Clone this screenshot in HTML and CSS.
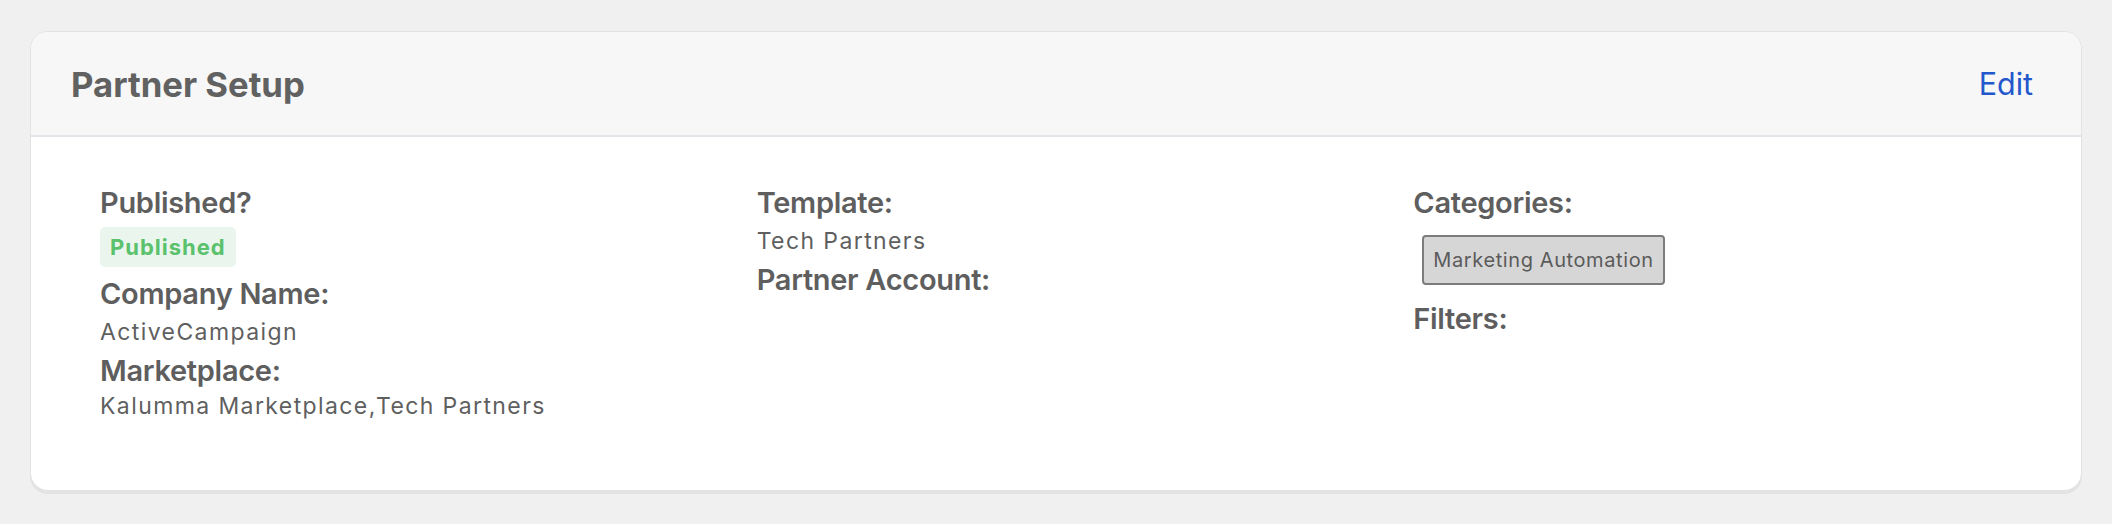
FILE: index.html
```html
<!DOCTYPE html>
<html lang="en">
<head>
<meta charset="utf-8">
<title>Partner Setup</title>
<link rel="stylesheet" href="styles.css">
</head>
<body>
<main class="page">
  <section class="card">
    <header class="card-header">
      <h2 class="card-title">Partner Setup</h2>
      <a class="edit-link" href="#">Edit</a>
    </header>
    <div class="card-body">
      <div class="field-col">
        <div class="field-label">Published?</div>
        <span class="status-badge">Published</span>
        <div class="field-label">Company Name:</div>
        <div class="field-value">ActiveCampaign</div>
        <div class="field-label">Marketplace:</div>
        <div class="field-value field-value--list">Kalumma Marketplace,Tech Partners</div>
      </div>
      <div class="field-col">
        <div class="field-label">Template:</div>
        <div class="field-value">Tech Partners</div>
        <div class="field-label">Partner Account:</div>
      </div>
      <div class="field-col">
        <div class="field-label">Categories:</div>
        <div class="tag-list">
          <span class="tag">Marketing Automation</span>
        </div>
        <div class="field-label">Filters:</div>
      </div>
    </div>
  </section>
</main>
</body>
</html>
```

FILE: styles.css
```css
* {
  box-sizing: border-box;
}

html,
body {
  margin: 0;
  padding: 0;
  background: #f0f0f0;
}

body {
  font-family: Inter, "Liberation Sans", sans-serif;
  color: #5f5f5f;
}

.page {
  padding: 31px 30px 30px;
}

.card {
  background: #ffffff;
  border: 1px solid #e2e2e2;
  border-radius: 18px;
  box-shadow: 0 3px 0 #e3e3e3;
  overflow: hidden;
}

/* header strip: title on the left, edit link on the right */
.card-header {
  display: flex;
  align-items: center;
  justify-content: space-between;
  height: 105px;
  padding: 0 40px;
  background: #f7f7f7;
  border-bottom: 2px solid #e1e4e8;
}

.card-title {
  margin: 0;
  font-size: 34.7px;
  font-weight: 700;
  color: #616161;
}

.edit-link {
  padding: 0 8px;
  font-size: 30.5px;
  font-weight: 400;
  color: #2358cc;
  text-decoration: none;
}

/* three equal field columns */
.card-body {
  display: grid;
  grid-template-columns: repeat(3, 1fr);
  padding: 48px 40px 66px;
}

.field-col {
  display: flex;
  flex-direction: column;
  align-items: flex-start;
  padding-left: 29px;
}

.field-label {
  font-size: 29px;
  line-height: 36px;
  font-weight: 600;
  color: #5e5e5e;
  letter-spacing: -0.3px;
  margin-bottom: 5px;
}

.field-value {
  font-size: 23px;
  line-height: 30px;
  font-weight: 400;
  color: #5f5f5f;
  letter-spacing: 1.4px;
  margin-bottom: 6px;
}

/* comma separated lists may wrap, so they sit on a tighter line */
.field-value--list {
  line-height: 24px;
}

.status-badge {
  height: 40px;
  line-height: 40px;
  margin: 1px 0 8.5px;
  padding: 0 10px;
  border-radius: 5px;
  background: #eaf6ed;
  color: #5bc16d;
  font-size: 22px;
  font-weight: 700;
  letter-spacing: 1px;
}

.tag-list {
  display: flex;
  margin: 9px 0 16px 9px;
}

.tag {
  height: 50px;
  line-height: 46px;
  padding: 0 9px;
  border: 2px solid #7c7c7c;
  border-radius: 4px;
  background: #d6d6d6;
  color: #5b5b5b;
  font-size: 20px;
  letter-spacing: 0.6px;
}
```
